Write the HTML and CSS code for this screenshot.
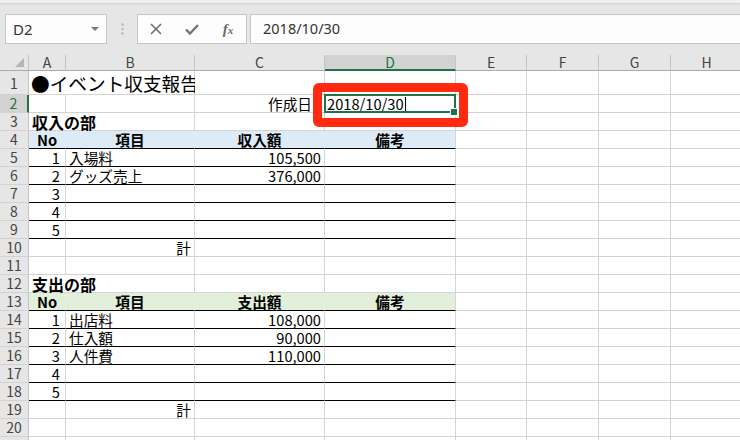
FILE: index.html
```html
<!DOCTYPE html>
<html lang="ja">
<head>
<meta charset="utf-8">
<title>イベント収支報告</title>
<link rel="stylesheet" href="styles.css">
</head>
<body>
<div class="topstrip"></div>
<div class="fbar">
  <div class="namebox"><span>D2</span><span class="drop"></span></div>
  <div class="grip">
    <svg width="3" height="12" viewBox="0 0 3 12"><circle cx="1.5" cy="1.5" r="1.2" fill="#b9b9b9"/><circle cx="1.5" cy="6" r="1.2" fill="#b9b9b9"/><circle cx="1.5" cy="10.5" r="1.2" fill="#b9b9b9"/></svg>
  </div>
  <div class="fbtns">
    <span class="fbtn"><svg width="12" height="12" viewBox="0 0 12 12"><path d="M1 1 L11 11 M11 1 L1 11" stroke="#707070" stroke-width="1.6" fill="none"/></svg></span>
    <span class="fbtn"><svg width="14" height="11" viewBox="0 0 14 11"><path d="M1 5.5 L5 9.5 L13 1" stroke="#707070" stroke-width="2.3" fill="none"/></svg></span>
    <span class="fbtn fx"><i>f</i><i class="sx">x</i></span>
  </div>
  <div class="finput">2018/10/30</div>
</div>

<div class="sheet">
  <!-- column headers -->
  <div class="ch corner"></div>
  <div class="ch">A</div><div class="ch">B</div><div class="ch">C</div><div class="ch sel">D</div>
  <div class="ch">E</div><div class="ch">F</div><div class="ch">G</div><div class="ch">H</div>

  <!-- 1 -->
  <div class="rh tall">1</div>
  <div class="c span2 title">●イベント収支報告</div>
  <div class="c"></div><div class="c"></div>
  <div class="c"></div><div class="c"></div><div class="c"></div><div class="c"></div>

  <!-- 2 -->
  <div class="rh sel">2</div>
  <div class="c"></div><div class="c"></div>
  <div class="c r date-label">作成日</div>
  <div class="c selcell">2018/10/30<span class="cursor"></span></div>
  <div class="c"></div><div class="c"></div><div class="c"></div><div class="c"></div>

  <!-- 3 -->
  <div class="rh">3</div>
  <div class="c span2 sec">収入の部</div>
  <div class="c"></div><div class="c"></div>
  <div class="c"></div><div class="c"></div><div class="c"></div><div class="c"></div>

  <!-- 4 -->
  <div class="rh">4</div>
  <div class="c blue b ctr bl">No</div>
  <div class="c blue b ctr bl">項目</div>
  <div class="c blue b ctr bl">収入額</div>
  <div class="c blue b ctr bl last">備考</div>
  <div class="c"></div><div class="c"></div><div class="c"></div><div class="c"></div>

  <!-- 5 -->
  <div class="rh">5</div>
  <div class="c r num bl">1</div><div class="c bl">入場料</div><div class="c r bl">105,500</div><div class="c bl"></div>
  <div class="c"></div><div class="c"></div><div class="c"></div><div class="c"></div>

  <!-- 6 -->
  <div class="rh">6</div>
  <div class="c r num bl">2</div><div class="c bl">グッズ売上</div><div class="c r bl">376,000</div><div class="c bl"></div>
  <div class="c"></div><div class="c"></div><div class="c"></div><div class="c"></div>

  <!-- 7 -->
  <div class="rh">7</div>
  <div class="c r num bl">3</div><div class="c bl"></div><div class="c r bl"></div><div class="c bl"></div>
  <div class="c"></div><div class="c"></div><div class="c"></div><div class="c"></div>

  <!-- 8 -->
  <div class="rh">8</div>
  <div class="c r num bl">4</div><div class="c bl"></div><div class="c r bl"></div><div class="c bl"></div>
  <div class="c"></div><div class="c"></div><div class="c"></div><div class="c"></div>

  <!-- 9 -->
  <div class="rh">9</div>
  <div class="c r num bl">5</div><div class="c bl"></div><div class="c r bl"></div><div class="c bl"></div>
  <div class="c"></div><div class="c"></div><div class="c"></div><div class="c"></div>

  <!-- 10 -->
  <div class="rh">10</div>
  <div class="c"></div><div class="c r">計</div><div class="c"></div><div class="c"></div>
  <div class="c"></div><div class="c"></div><div class="c"></div><div class="c"></div>

  <!-- 11 -->
  <div class="rh">11</div>
  <div class="c"></div><div class="c"></div><div class="c"></div><div class="c"></div>
  <div class="c"></div><div class="c"></div><div class="c"></div><div class="c"></div>

  <!-- 12 -->
  <div class="rh">12</div>
  <div class="c span2 sec">支出の部</div>
  <div class="c"></div><div class="c"></div>
  <div class="c"></div><div class="c"></div><div class="c"></div><div class="c"></div>

  <!-- 13 -->
  <div class="rh">13</div>
  <div class="c green b ctr bl">No</div>
  <div class="c green b ctr bl">項目</div>
  <div class="c green b ctr bl">支出額</div>
  <div class="c green b ctr bl last">備考</div>
  <div class="c"></div><div class="c"></div><div class="c"></div><div class="c"></div>

  <!-- 14 -->
  <div class="rh">14</div>
  <div class="c r num bl">1</div><div class="c bl">出店料</div><div class="c r bl">108,000</div><div class="c bl"></div>
  <div class="c"></div><div class="c"></div><div class="c"></div><div class="c"></div>

  <!-- 15 -->
  <div class="rh">15</div>
  <div class="c r num bl">2</div><div class="c bl">仕入額</div><div class="c r bl">90,000</div><div class="c bl"></div>
  <div class="c"></div><div class="c"></div><div class="c"></div><div class="c"></div>

  <!-- 16 -->
  <div class="rh">16</div>
  <div class="c r num bl">3</div><div class="c bl">人件費</div><div class="c r bl">110,000</div><div class="c bl"></div>
  <div class="c"></div><div class="c"></div><div class="c"></div><div class="c"></div>

  <!-- 17 -->
  <div class="rh">17</div>
  <div class="c r num bl">4</div><div class="c bl"></div><div class="c r bl"></div><div class="c bl"></div>
  <div class="c"></div><div class="c"></div><div class="c"></div><div class="c"></div>

  <!-- 18 -->
  <div class="rh">18</div>
  <div class="c r num bl">5</div><div class="c bl"></div><div class="c r bl"></div><div class="c bl"></div>
  <div class="c"></div><div class="c"></div><div class="c"></div><div class="c"></div>

  <!-- 19 -->
  <div class="rh">19</div>
  <div class="c"></div><div class="c r">計</div><div class="c"></div><div class="c"></div>
  <div class="c"></div><div class="c"></div><div class="c"></div><div class="c"></div>

  <!-- 20 -->
  <div class="rh">20</div>
  <div class="c"></div><div class="c"></div><div class="c"></div><div class="c"></div>
  <div class="c"></div><div class="c"></div><div class="c"></div><div class="c"></div>

  <!-- 21 -->
  <div class="rh">21</div>
  <div class="c"></div><div class="c"></div><div class="c"></div><div class="c"></div>
  <div class="c"></div><div class="c"></div><div class="c"></div><div class="c"></div>

  <div class="callout"></div>
</div>
</body>
</html>
```

FILE: styles.css
```css
* { box-sizing: border-box; }
html, body { margin: 0; padding: 0; }
body {
  width: 740px;
  height: 440px;
  overflow: hidden;
  background: #e6e6e6;
  font-family: "Noto Sans CJK JP", "Noto Sans", sans-serif;
}

.topstrip {
  height: 3px;
  background: #f1f0ee;
  box-shadow: 0 1px 2px rgba(0,0,0,0.10);
}

/* formula bar */
.fbar {
  display: flex;
  align-items: center;
  height: 52px;
  padding-left: 5px;
}
.namebox {
  width: 102px;
  height: 30px;
  background: #fdfdfd;
  border: 1px solid #c6c6c6;
  display: flex;
  align-items: center;
  justify-content: space-between;
  padding: 0 7px 0 7px;
  font-family: "Noto Sans", sans-serif;
  font-size: 15px;
  color: #333;
}
.drop {
  width: 0;
  height: 0;
  border-left: 4px solid transparent;
  border-right: 4px solid transparent;
  border-top: 4px solid #7a7a7a;
}
.grip {
  width: 30px;
  display: flex;
  justify-content: center;
  align-items: center;
}
.grip svg { display: block; }
.fbtns {
  width: 110px;
  height: 30px;
  background: #fdfdfd;
  border: 1px solid #c6c6c6;
  display: flex;
  align-items: center;
}
.fbtn {
  width: 36px;
  display: flex;
  justify-content: center;
  align-items: center;
}
.fbtn svg { display: block; }
.fx {
  font-family: "Liberation Serif", serif;
  color: #6b6b6b;
  font-size: 15px;
  font-weight: 700;
  line-height: 1;
}
.fx .sx { font-size: 11px; margin-left: 0; position: relative; top: 1px; }

.finput {
  flex: 1;
  margin-left: 3px;
  height: 30px;
  background: #fdfdfd;
  border: 1px solid #c6c6c6;
  border-right: none;
  padding-left: 12px;
  font-family: "Noto Sans", sans-serif;
  font-size: 14.5px;
  line-height: 27px;
  color: #333;
}

/* sheet */
.sheet {
  position: relative;
  display: grid;
  grid-template-columns: 29px 37px 129px 130px 131px 71px 72px 72px 72px;
  grid-template-rows: 16px 24px repeat(20, 18px);
  background: #fff;
}

.ch {
  background: #e6e6e6;
  border-right: 1px solid #c4c4c4;
  border-bottom: 1px solid #ababab;
  font-size: 14px;
  line-height: 15px;
  color: #444;
  text-align: center;
}
.ch.sel {
  background: #d2d2d2;
  color: #217346;
  border-bottom: 2px solid #217346;
}
.corner { position: relative; }
.corner::after {
  content: "";
  position: absolute;
  right: 4px;
  bottom: 3px;
  width: 0;
  height: 0;
  border-left: 9px solid transparent;
  border-bottom: 9px solid #b5b5b5;
}

.rh {
  background: #e6e6e6;
  border-right: 1px solid #c4c4c4;
  border-bottom: 1px solid #d2d2d2;
  font-size: 14px;
  line-height: 17px;
  color: #444;
  text-align: center;
}
.rh.tall { line-height: 25px; }
.rh.sel {
  background: #d2d2d2;
  color: #217346;
  border-right: 2px solid #217346;
}

.c {
  background: #fff;
  border-right: 1px solid #d4d4d4;
  border-bottom: 1px solid #d4d4d4;
  font-size: 14.67px;
  line-height: 18px;
  color: #000;
  padding: 0 3px;
  white-space: nowrap;
}
.r { text-align: right; }
.ctr { text-align: center; }
.b { font-weight: 700; }
.num { padding-right: 5px; }
.bl { border-bottom-color: #000; }
.blue { background: #ddebf7; border-right-color: #ddebf7; }
.green { background: #e2efda; border-right-color: #e2efda; }
.blue.last, .green.last { border-right-color: #d4d4d4; }
.span2 { grid-column: span 2; }
.title { font-size: 18.67px; line-height: 24px; padding-left: 2px; }
.sec { font-size: 16px; font-weight: 700; line-height: 18px; }
.date-label { padding-right: 12px; }

.selcell {
  position: relative;
  z-index: 2;
  padding-left: 2px;
}
.selcell::after {
  content: "";
  position: absolute;
  left: -1px;
  top: -1px;
  right: -1px;
  bottom: -1px;
  border: 2px solid #217346;
}
.selcell::before {
  content: "";
  position: absolute;
  right: -3px;
  bottom: -4px;
  width: 6px;
  height: 6px;
  background: #217346;
  border: 1px solid #fff;
  z-index: 1;
}
.cursor {
  display: inline-block;
  width: 1px;
  height: 15px;
  background: #000;
  vertical-align: -2px;
  margin-left: 1px;
}

.callout {
  position: absolute;
  left: 313px;
  top: 28px;
  width: 155px;
  height: 44px;
  border: 9px solid #ff2a10;
  border-radius: 6px;
  z-index: 3;
}
```
